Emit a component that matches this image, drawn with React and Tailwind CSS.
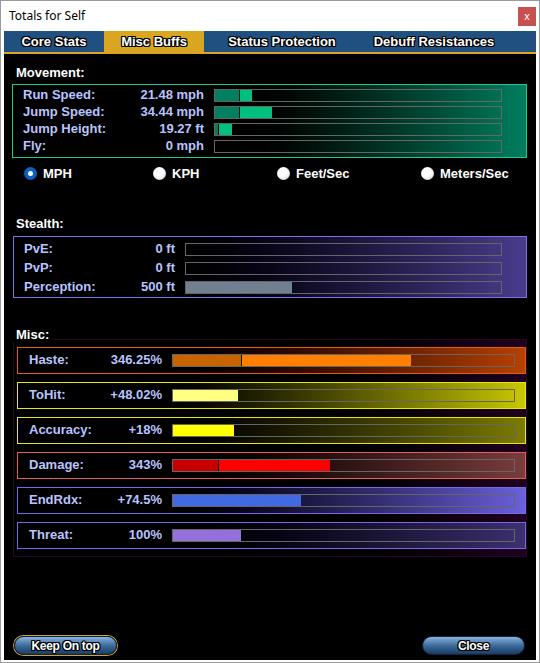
import { useState } from 'react'

const OUTLINE = '[text-shadow:1px_0_0_#000,-1px_0_0_#000,0_1px_0_#000,0_-1px_0_#000,1px_1px_0_#000,-1px_-1px_0_#000,1px_-1px_0_#000,-1px_1px_0_#000]'

const TABS = [
  { name: 'Core Stats', w: 'w-[100px]' },
  { name: 'Misc Buffs', w: 'w-[100px]' },
  { name: 'Status Protection', w: 'w-[156px]' },
  { name: 'Debuff Resistances', w: 'w-[148px]' },
]

const MOVEMENT = [
  { label: 'Run Speed:', value: '21.48 mph', base: 24, extra: 12, mark: true },
  { label: 'Jump Speed:', value: '34.44 mph', base: 24, extra: 32, mark: true },
  { label: 'Jump Height:', value: '19.27 ft', base: 3, extra: 13, mark: true },
  { label: 'Fly:', value: '0 mph', base: 0, extra: 0 },
]

const STEALTH = [
  { label: 'PvE:', value: '0 ft', fill: 0 },
  { label: 'PvP:', value: '0 ft', fill: 0 },
  { label: 'Perception:', value: '500 ft', fill: 106 },
]

const MISC = [
  { label: 'Haste:', value: '346.25%', box: 'border-[#e0600c] to-[#b84000]', base: 68, baseColor: 'bg-[#c86400]', extra: 169, extraColor: 'bg-[#ff8000]' },
  { label: 'ToHit:', value: '+48.02%', box: 'border-[#e8e800] to-[#c8c800]', base: 0, extra: 65, extraColor: 'bg-[#ffff80]' },
  { label: 'Accuracy:', value: '+18%', box: 'border-[#e8e800] to-[#7c7c00]', base: 0, extra: 61, extraColor: 'bg-[#ffff00]' },
  { label: 'Damage:', value: '343%', box: 'border-[#e06060] to-[#7a3c3c]', base: 45, baseColor: 'bg-[#c80000]', extra: 111, extraColor: 'bg-[#ff0000]' },
  { label: 'EndRdx:', value: '+74.5%', box: 'border-[#7868e8] to-[#6a60dc]', base: 0, extra: 128, extraColor: 'bg-[#4169e1]' },
  { label: 'Threat:', value: '100%', box: 'border-[#7868e8] to-[#3c3070]', base: 0, extra: 68, extraColor: 'bg-[#9370db]' },
]

function Bar({ width, base = 0, baseColor, extra = 0, extraColor, mark }) {
  return (
    <div className={`flex h-[13px] border border-[#666] ${width}`}>
      {base > 0 && <div className={`h-full ${baseColor}`} style={{ width: base }} />}
      {mark && <div className="h-full w-[1px] bg-black" />}
      {extra > 0 && <div className={`h-full ${extraColor}`} style={{ width: extra }} />}
    </div>
  )
}

function Radio({ label, checked, onClick, className }) {
  return (
    <button onClick={onClick} className={`flex items-center gap-[6px] ${className}`}>
      {checked ? (
        <span className="flex h-[13px] w-[13px] items-center justify-center rounded-full bg-[#0a5fc0]">
          <span className="h-[5px] w-[5px] rounded-full bg-white" />
        </span>
      ) : (
        <span className="h-[13px] w-[13px] rounded-full bg-[radial-gradient(circle_at_40%_35%,#ffffff_40%,#c8c8c8)]" />
      )}
      <span className="text-[13px] font-bold text-white">{label}</span>
    </button>
  )
}

function Pill({ children, glow }) {
  return (
    <button className={`flex h-[19px] w-[103px] items-center justify-center rounded-full border border-[#0c2440] bg-linear-to-b from-[#8cb4dc] via-[#3c6c9c] to-[#1a3c64] ${glow ? 'shadow-[0_0_0_1px_#d8a030]' : ''}`}>
      <span className={`text-[12px] font-bold tracking-[-0.3px] text-white ${OUTLINE}`}>{children}</span>
    </button>
  )
}

export default function App() {
  const [tab, setTab] = useState('Misc Buffs')
  const [unit, setUnit] = useState('MPH')

  return (
    <div className="flex h-[663px] w-[540px] flex-col border border-[#9a9a9a] bg-white font-['Liberation_Sans',Arial,sans-serif]">
      {/* Title bar */}
      <div className="flex h-[30px] items-center justify-between pl-[8px] pr-[3px]">
        <span className="font-['Noto_Sans',sans-serif] text-[12px] text-black">Totals for Self</span>
        <span className="flex h-[19px] w-[18px] items-center justify-center bg-[#c75050] text-[11px] text-white">x</span>
      </div>

      <div className="flex flex-1 flex-col px-[3px] pb-[2px]">
        {/* Tabs */}
        <div className="flex h-[23px] border-b-2 border-[#daa520] bg-[#1f5080]">
          {TABS.map(t => (
            <button key={t.name} onClick={() => setTab(t.name)}
              className={`flex h-full items-center justify-center text-[13px] font-bold text-white ${OUTLINE} ${t.w} ${tab === t.name ? 'bg-[#daa520]' : ''}`}>
              {t.name}
            </button>
          ))}
        </div>

        <div className="flex flex-1 flex-col bg-black pl-[8px] pr-[9px]">
          {/* Movement */}
          <div className="mt-[9px] pl-[4px] text-[13px] font-bold text-white">Movement:</div>
          <div className="mt-[1px] flex flex-col gap-[4px] border border-[#20c890] bg-linear-to-r from-black from-40% to-[#007e5e] py-[4px] pl-[10px] pr-[24px]">
            {MOVEMENT.map(r => (
              <div key={r.label} className="flex h-[13px] items-center text-[13px] font-bold text-[#b8c4ff]">
                <span className="w-[100px]">{r.label}</span>
                <span className="w-[82px] text-right">{r.value}</span>
                <div className="ml-[10px]">
                  <Bar width="w-[288px]" base={r.base} baseColor="bg-[#008060]" extra={r.extra} extraColor="bg-[#00c080]" mark={r.mark} />
                </div>
              </div>
            ))}
          </div>

          {/* Units */}
          <div className="mt-[6px] flex items-center">
            <Radio label="MPH" checked={unit === 'MPH'} onClick={() => setUnit('MPH')} className="ml-[12px] w-[129px]" />
            <Radio label="KPH" checked={unit === 'KPH'} onClick={() => setUnit('KPH')} className="w-[124px]" />
            <Radio label="Feet/Sec" checked={unit === 'Feet/Sec'} onClick={() => setUnit('Feet/Sec')} className="w-[144px]" />
            <Radio label="Meters/Sec" checked={unit === 'Meters/Sec'} onClick={() => setUnit('Meters/Sec')} />
          </div>

          {/* Stealth */}
          <div className="mt-[31px] pl-[4px] text-[13px] font-bold text-white">Stealth:</div>
          <div className="ml-[1px] mt-[2px] flex flex-col gap-[6px] border border-[#8070e8] bg-linear-to-r from-black from-25% to-[#4a3c8c] pb-[3px] pt-[6px] pl-[10px] pr-[24px]">
            {STEALTH.map(r => (
              <div key={r.label} className="flex h-[13px] items-center text-[13px] font-bold text-[#b8c4ff]">
                <span className="w-[100px]">{r.label}</span>
                <span className="w-[52px] text-right">{r.value}</span>
                <div className="ml-[10px]">
                  <Bar width="w-[317px]" extra={r.fill} extraColor="bg-[#708090]" />
                </div>
              </div>
            ))}
          </div>

          {/* Misc */}
          <div className="relative mt-[29px]">
            <div className="relative z-10 w-fit bg-black pl-[4px] pr-[3px] text-[13px] font-bold leading-[15px] text-white">Misc:</div>
            <div className="-mt-[3px] ml-[1px] flex flex-col gap-[8px] border border-[#240824] bg-linear-to-r from-black from-50% to-[#200020] pb-[7px] pl-[3px] pr-[0px] pt-[7px]">
              {MISC.map(r => (
                <div key={r.label} className={`flex h-[27px] items-center border bg-linear-to-r from-black from-25% ${r.box} pl-[11px] pr-[10px] text-[13px] font-bold text-[#b8c4ff]`}>
                  <span className="w-[80px]">{r.label}</span>
                  <span className="w-[62px] text-right">{r.value}</span>
                  <div className="ml-[10px]">
                    <Bar width="w-[343px]" base={r.base} baseColor={r.baseColor} extra={r.extra} extraColor={r.extraColor} mark={r.base > 0} />
                  </div>
                </div>
              ))}
            </div>
          </div>

          {/* Bottom buttons */}
          <div className="mt-auto mb-[5px] flex items-center justify-between pl-[2px] pr-[2px]">
            <Pill glow>Keep On top</Pill>
            <Pill>Close</Pill>
          </div>
        </div>
      </div>
    </div>
  )
}
